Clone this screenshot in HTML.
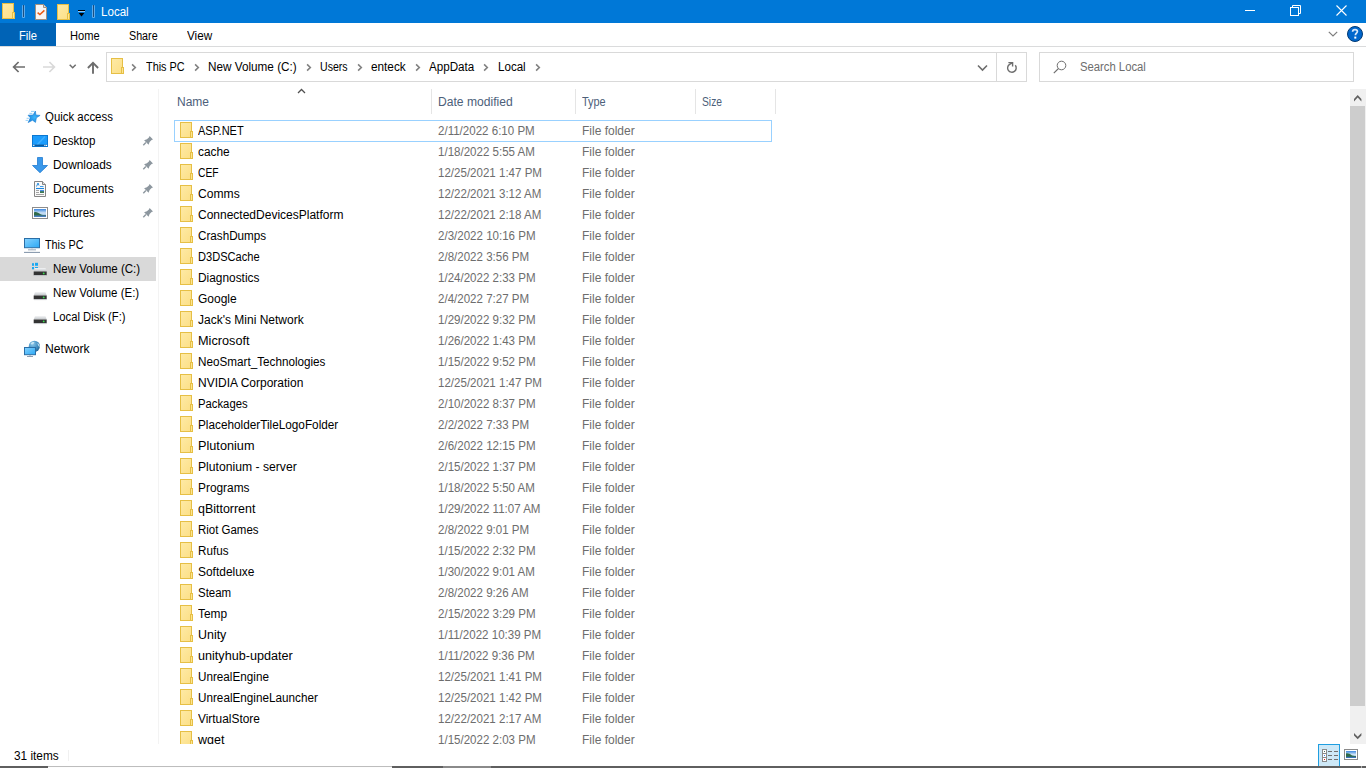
<!DOCTYPE html>
<html><head><meta charset="utf-8">
<style>
*{margin:0;padding:0;box-sizing:border-box}
html,body{width:1366px;height:768px;overflow:hidden;background:#fff;font-family:"Liberation Sans",sans-serif;font-size:12px;color:#000}
.a{position:absolute;display:block}
.t{position:absolute;white-space:nowrap;line-height:14px;height:14px}
.hdr{color:#4c607a}
.g{color:#6d6d6d}
.sep{position:absolute;width:1px;background:#e5e5e5}
#list{position:absolute;left:159px;top:114px;width:1191px;height:630px;overflow:hidden}
</style></head>
<body>
<svg width="0" height="0" style="position:absolute"><defs><linearGradient id="fg" x1="0" y1="0" x2="1" y2="1"><stop offset="0" stop-color="#feeaa6"/><stop offset="1" stop-color="#fcdf86"/></linearGradient></defs></svg>
<div class="a" style="left:0;top:0;width:1366px;height:23px;background:#0078d7"></div>
<svg class="a" style="left:2px;top:3px" width="14" height="17" viewBox="0 0 14 17"><rect x="0.5" y="0.5" width="11" height="15" fill="url(#fg)" stroke="#e6bf45"/><rect x="10.5" y="9.5" width="2" height="6" fill="#fde590" stroke="#e6bf45"/></svg>
<div class="a" style="left:22px;top:5px;width:3px;height:13px;background:#5eaaea;border-radius:1px"></div><div class="a" style="left:23px;top:5px;width:1px;height:12px;background:#1c4f80"></div>
<svg class="a" style="left:35px;top:4px" width="13" height="16" viewBox="0 0 13 16"><path d="M0.5 0.5H8.5L11.5 3.5V15.5H0.5Z" fill="#f6f6f6" stroke="#a3917f"/><path d="M8.5 0.5V3.5H11.5" fill="#ddd" stroke="#a3917f"/><path d="M2.6 8.6L4.9 10.6L9.4 6.4" fill="none" stroke="#ea5a14" stroke-width="1.5"/></svg>
<svg class="a" style="left:57px;top:4px" width="14" height="17" viewBox="0 0 14 17"><rect x="0.5" y="0.5" width="11" height="15" fill="url(#fg)" stroke="#e6bf45"/><rect x="10.5" y="9.5" width="2" height="6" fill="#fde590" stroke="#e6bf45"/></svg>
<svg class="a" style="left:78px;top:10px" width="8" height="8" viewBox="0 0 8 8"><rect x="0" y="0" width="7" height="1" fill="#000"/><rect x="0" y="1" width="7" height="1" fill="#8cc6f5"/><path d="M0.6 3H6.4L3.5 6.6Z" fill="#000"/></svg>
<div class="a" style="left:92px;top:5px;width:3px;height:13px;background:#5eaaea;border-radius:1px"></div><div class="a" style="left:93px;top:5px;width:1px;height:12px;background:#1c4f80"></div>
<div class="t" style="left:101px;top:5px;transform:scaleX(0.965);transform-origin:0 0;color:#fff">Local</div>
<div class="a" style="left:1245px;top:10px;width:10px;height:1px;background:#fff"></div>
<svg class="a" style="left:1289px;top:4px" width="12" height="12" viewBox="0 0 12 12"><rect x="1.5" y="3.5" width="8" height="8" fill="none" stroke="#fff"/><path d="M3.5 3.5V1.5H11.5V9.5H9.5" fill="none" stroke="#fff"/></svg>
<svg class="a" style="left:1336px;top:5px" width="11" height="11" viewBox="0 0 11 11"><path d="M0.5 0.5L10.5 10.5M10.5 0.5L0.5 10.5" stroke="#fff" stroke-width="1.1"/></svg>
<div class="a" style="left:0;top:46px;width:1366px;height:1px;background:#dadbdc"></div>
<div class="a" style="left:0;top:23px;width:56px;height:23px;background:#0063b6"></div>
<div class="t" style="left:19px;top:29px;transform:scaleX(0.933);transform-origin:0 0;color:#fff">File</div>
<div class="t" style="left:70px;top:29px;transform:scaleX(0.926);transform-origin:0 0">Home</div>
<div class="t" style="left:129px;top:29px;transform:scaleX(0.894);transform-origin:0 0">Share</div>
<div class="t" style="left:187px;top:29px;transform:scaleX(0.976);transform-origin:0 0">View</div>
<svg class="a" style="left:1328px;top:31px" width="10" height="6" viewBox="0 0 10 6"><path d="M0.8 0.8L5 5L9.2 0.8" fill="none" stroke="#7d7d7d" stroke-width="1.2"/></svg>
<svg class="a" style="left:1347px;top:26px" width="16" height="16" viewBox="0 0 16 16"><circle cx="8" cy="8" r="7.5" fill="#0066cc" stroke="#023a73" stroke-width="1"/><path d="M5.6 5.8C5.6 4.3 6.7 3.6 8 3.6C9.4 3.6 10.4 4.4 10.4 5.6C10.4 7.1 8.4 7.3 8.4 9.2" fill="none" stroke="#d8e8fa" stroke-width="1.7"/><rect x="7.3" y="10.6" width="2" height="2" fill="#fff"/></svg>
<svg class="a" style="left:12px;top:61px" width="14" height="12" viewBox="0 0 14 12"><path d="M13 6H1.6M6.6 1L1.6 6L6.6 11" fill="none" stroke="#6d6d6d" stroke-width="1.7"/></svg>
<svg class="a" style="left:42px;top:61px" width="14" height="12" viewBox="0 0 14 12"><path d="M1 6H12.4M7.4 1L12.4 6L7.4 11" fill="none" stroke="#d9d9d9" stroke-width="1.7"/></svg>
<svg class="a" style="left:68px;top:63px" width="9" height="7" viewBox="0 0 9 7"><path d="M1.7 1.7L4.7 4.7L7.7 1.7" fill="none" stroke="#6d6d6d" stroke-width="1.5"/></svg>
<svg class="a" style="left:86px;top:61px" width="14" height="14" viewBox="0 0 14 14"><path d="M7 12.7V2M1.9 7L7 1.9L12.1 7" fill="none" stroke="#6d6d6d" stroke-width="1.9"/></svg>
<div class="a" style="left:106px;top:52px;width:921px;height:30px;border:1px solid #d9d9d9"></div>
<div class="a" style="left:996px;top:53px;width:1px;height:28px;background:#d9d9d9"></div>
<svg class="a" style="left:111px;top:58px" width="14" height="17" viewBox="0 0 14 17"><rect x="0.5" y="0.5" width="11" height="15" fill="url(#fg)" stroke="#e6bf45"/><rect x="10.5" y="9.5" width="2" height="6" fill="#fde590" stroke="#e6bf45"/></svg>
<svg class="a" style="left:131px;top:63px" width="7" height="9" viewBox="0 0 7 9"><path d="M1.1 1.4L4.3 4.5L1.1 7.6" fill="none" stroke="#808080" stroke-width="1.6"/></svg>
<svg class="a" style="left:194px;top:63px" width="7" height="9" viewBox="0 0 7 9"><path d="M1.1 1.4L4.3 4.5L1.1 7.6" fill="none" stroke="#808080" stroke-width="1.6"/></svg>
<svg class="a" style="left:306px;top:63px" width="7" height="9" viewBox="0 0 7 9"><path d="M1.1 1.4L4.3 4.5L1.1 7.6" fill="none" stroke="#808080" stroke-width="1.6"/></svg>
<svg class="a" style="left:357px;top:63px" width="7" height="9" viewBox="0 0 7 9"><path d="M1.1 1.4L4.3 4.5L1.1 7.6" fill="none" stroke="#808080" stroke-width="1.6"/></svg>
<svg class="a" style="left:415px;top:63px" width="7" height="9" viewBox="0 0 7 9"><path d="M1.1 1.4L4.3 4.5L1.1 7.6" fill="none" stroke="#808080" stroke-width="1.6"/></svg>
<svg class="a" style="left:483px;top:63px" width="7" height="9" viewBox="0 0 7 9"><path d="M1.1 1.4L4.3 4.5L1.1 7.6" fill="none" stroke="#808080" stroke-width="1.6"/></svg>
<svg class="a" style="left:535px;top:63px" width="7" height="9" viewBox="0 0 7 9"><path d="M1.1 1.4L4.3 4.5L1.1 7.6" fill="none" stroke="#808080" stroke-width="1.6"/></svg>
<div class="t" style="left:146px;top:60px;transform:scaleX(0.905);transform-origin:0 0">This PC</div>
<div class="t" style="left:208px;top:60px;transform:scaleX(0.978);transform-origin:0 0">New Volume (C:)</div>
<div class="t" style="left:320px;top:60px;transform:scaleX(0.881);transform-origin:0 0">Users</div>
<div class="t" style="left:371px;top:60px;transform:scaleX(0.981);transform-origin:0 0">enteck</div>
<div class="t" style="left:429px;top:60px;transform:scaleX(0.970);transform-origin:0 0">AppData</div>
<div class="t" style="left:498px;top:60px;transform:scaleX(0.965);transform-origin:0 0">Local</div>
<svg class="a" style="left:977px;top:64px" width="11" height="8" viewBox="0 0 11 8"><path d="M1 1.5L5.5 6L10 1.5" fill="none" stroke="#6d6d6d" stroke-width="1.6"/></svg>
<svg class="a" style="left:1002px;top:57px" width="20" height="20" viewBox="0 0 20 20"><path d="M13.3 8.3A4.3 4.3 0 1 1 7.6 7.3L10.6 5.7" fill="none" stroke="#6d6d6d" stroke-width="1.4"/><path d="M6.4 5.6H10.6V9.6" fill="none" stroke="#6d6d6d" stroke-width="1.4"/></svg>
<div class="a" style="left:1039px;top:52px;width:315px;height:30px;border:1px solid #d9d9d9"></div>
<svg class="a" style="left:1053px;top:60px" width="14" height="14" viewBox="0 0 14 14"><circle cx="8.5" cy="5.5" r="4.3" fill="none" stroke="#6d6d6d" stroke-width="1"/><path d="M5.5 8.5L0.8 13.2" stroke="#6d6d6d" stroke-width="1.1"/></svg>
<div class="t" style="left:1080px;top:60px;transform:scaleX(0.940);transform-origin:0 0;color:#6d6d6d">Search Local</div>
<div class="a" style="left:158px;top:89px;width:1px;height:655px;background:#f3f3f3"></div>
<div class="a" style="left:0;top:257px;width:156px;height:24px;background:#d9d9d9"></div>
<div class="t" style="left:45px;top:110px;transform:scaleX(0.951);transform-origin:0 0">Quick access</div>
<div class="t" style="left:53px;top:134px;transform:scaleX(0.963);transform-origin:0 0">Desktop</div>
<div class="t" style="left:53px;top:158px;transform:scaleX(0.990);transform-origin:0 0">Downloads</div>
<div class="t" style="left:53px;top:182px">Documents</div>
<div class="t" style="left:53px;top:206px;transform:scaleX(0.967);transform-origin:0 0">Pictures</div>
<div class="t" style="left:45px;top:238px;transform:scaleX(0.901);transform-origin:0 0">This PC</div>
<div class="t" style="left:53px;top:262px;transform:scaleX(0.961);transform-origin:0 0">New Volume (C:)</div>
<div class="t" style="left:53px;top:286px;transform:scaleX(0.957);transform-origin:0 0">New Volume (E:)</div>
<div class="t" style="left:53px;top:310px;transform:scaleX(0.939);transform-origin:0 0">Local Disk (F:)</div>
<div class="t" style="left:45px;top:342px;transform:scaleX(1.016);transform-origin:0 0">Network</div>
<svg class="a" style="left:22px;top:108px" width="22" height="18" viewBox="0 0 22 18"><defs><radialGradient id="sg" cx="0.55" cy="0.55" r="0.6"><stop offset="0" stop-color="#3cb6fb"/><stop offset="1" stop-color="#1a7fd6"/></radialGradient></defs><path d="M13.4 3L13.9 7L18.1 7.4L14.4 9.8L13.5 14.4L10.5 12.2L6.2 14.6L8.3 9.8L6 7.2L11 7Z" fill="url(#sg)" stroke="#1a7fd6" stroke-width="0.6" stroke-linejoin="round"/><path d="M9 3.4H12.6M7.4 5.4H10.4M4.6 10.3H6.9M3.6 12.4H6" stroke="#86c8f6" stroke-width="0.9"/></svg>
<svg class="a" style="left:32px;top:135px" width="16" height="12" viewBox="0 0 16 12"><rect x="0.5" y="0.5" width="15" height="11" fill="#1c9cfc" stroke="#0b78d2"/><path d="M5 10L13 1.5" stroke="#3fb0ff" stroke-width="1.6"/><rect x="1" y="9.6" width="14" height="1.6" fill="#0c5a9e"/><rect x="1.2" y="9.8" width="1.2" height="1.2" fill="#fff"/><rect x="12.3" y="9.8" width="1.2" height="1.2" fill="#fff"/><rect x="13.9" y="9.8" width="1.2" height="1.2" fill="#fff"/></svg>
<svg class="a" style="left:32px;top:157px" width="16" height="16" viewBox="0 0 16 16"><path d="M5.5 0.5H10.5V8.5H15.5L8 15.7L0.5 8.5H5.5Z" fill="#3a98ea" stroke="#1f7bd2" stroke-width="0.8" stroke-linejoin="round"/></svg>
<svg class="a" style="left:34px;top:181px" width="12" height="16" viewBox="0 0 12 16"><path d="M0.5 0.5H8.5L11.5 3.5V15.5H0.5Z" fill="#fafafa" stroke="#858585"/><path d="M8.5 0.5V3.5H11.5" fill="#e0e0e0" stroke="#858585"/><path d="M2.5 5.5L4 2M4 2L5 4.5" stroke="#2a8ee0" stroke-width="1"/><path d="M6 5.5H9.5" stroke="#2a8ee0" stroke-width="0.9"/><path d="M2 7.5H10" stroke="#1a86e0" stroke-width="1.1"/><path d="M2 9.5H5M2 11.5H5M2 13.5H10" stroke="#9a9a9a" stroke-width="0.9"/><rect x="6" y="9" width="4" height="3" fill="#3f7a52"/><rect x="6" y="9" width="4" height="1.2" fill="#4a8ee8"/></svg>
<svg class="a" style="left:32px;top:207px" width="16" height="12" viewBox="0 0 16 12"><defs><linearGradient id="pg" x1="0" y1="0" x2="0" y2="1"><stop offset="0" stop-color="#3a86e0"/><stop offset="0.5" stop-color="#cfe3f5"/><stop offset="1" stop-color="#7aa8d8"/></linearGradient></defs><rect x="0.5" y="0.5" width="15" height="11" fill="#fff" stroke="#8c8c8c"/><rect x="2" y="2" width="12" height="8" fill="url(#pg)"/><path d="M2 5.5C4 4.5 6 5.5 9 7.5C11 8.2 13 8 14 8V10H2Z" fill="#2f6a4a"/><path d="M2 8.5H14V10H2Z" fill="#4a7fc0"/></svg>
<svg class="a" style="left:24px;top:238px" width="16" height="16" viewBox="0 0 16 16"><defs><linearGradient id="mg" x1="0" y1="0" x2="1" y2="1"><stop offset="0" stop-color="#86d2ff"/><stop offset="1" stop-color="#2aa8f4"/></linearGradient></defs><rect x="0.5" y="0.5" width="15" height="9.2" fill="url(#mg)" stroke="#2b6ea6"/><rect x="7" y="10.2" width="2" height="1" fill="#c8d2dc"/><rect x="4" y="11.4" width="8" height="0.9" fill="#8d9db0"/><rect x="0" y="13.5" width="16" height="0.6" fill="#dfe5ea"/><rect x="0" y="14" width="16" height="1" fill="#8d9db0"/></svg>
<svg class="a" style="left:32px;top:262px" width="16" height="16" viewBox="0 0 16 16"><rect x="0" y="1.2" width="2" height="2.6" fill="#1ba8f2"/><rect x="3" y="0.8" width="3" height="3" fill="#1ba8f2"/><rect x="0" y="5" width="2" height="2.3" fill="#1ba8f2"/><rect x="3" y="5" width="3" height="2.6" fill="#1ba8f2"/><defs><linearGradient id="dg" x1="0" y1="0" x2="0" y2="1"><stop offset="0" stop-color="#f4f5f6"/><stop offset="1" stop-color="#bfc3c7"/></linearGradient></defs><path d="M3 6H13.5L14.7 9.5H1.8Z" fill="url(#dg)"/><rect x="1.7" y="9.5" width="13" height="3.8" fill="#333"/><rect x="2" y="13.3" width="12.5" height="0.8" fill="#c8ccd0"/><circle cx="11.7" cy="11.4" r="0.9" fill="#3be04e"/></svg>
<svg class="a" style="left:32px;top:286px" width="16" height="16" viewBox="0 0 16 16"><defs><linearGradient id="dg" x1="0" y1="0" x2="0" y2="1"><stop offset="0" stop-color="#f4f5f6"/><stop offset="1" stop-color="#bfc3c7"/></linearGradient></defs><path d="M3 6H13.5L14.7 9.5H1.8Z" fill="url(#dg)"/><rect x="1.7" y="9.5" width="13" height="3.8" fill="#333"/><rect x="2" y="13.3" width="12.5" height="0.8" fill="#c8ccd0"/><circle cx="11.7" cy="11.4" r="0.9" fill="#3be04e"/></svg>
<svg class="a" style="left:32px;top:310px" width="16" height="16" viewBox="0 0 16 16"><defs><linearGradient id="dg" x1="0" y1="0" x2="0" y2="1"><stop offset="0" stop-color="#f4f5f6"/><stop offset="1" stop-color="#bfc3c7"/></linearGradient></defs><path d="M3 6H13.5L14.7 9.5H1.8Z" fill="url(#dg)"/><rect x="1.7" y="9.5" width="13" height="3.8" fill="#333"/><rect x="2" y="13.3" width="12.5" height="0.8" fill="#c8ccd0"/><circle cx="11.7" cy="11.4" r="0.9" fill="#3be04e"/></svg>
<svg class="a" style="left:24px;top:340px" width="17" height="18" viewBox="0 0 17 18"><defs><linearGradient id="ng" x1="0" y1="0" x2="1" y2="1"><stop offset="0" stop-color="#86d2ff"/><stop offset="1" stop-color="#2aa8f4"/></linearGradient></defs><radialGradient id="gg" cx="0.35" cy="0.3" r="0.8"><stop offset="0" stop-color="#8cc8ea"/><stop offset="0.6" stop-color="#3f8cc0"/><stop offset="1" stop-color="#1f5f8c"/></radialGradient><circle cx="10.4" cy="6.3" r="5.6" fill="url(#gg)"/><path d="M6.5 4C7.5 2 9.5 1.5 10.5 2.5C10 4 8 5 6.5 4Z M13.5 2.8C15 4 16 5.5 15.8 7.5C14.5 6.5 13.5 5 13.5 2.8Z" fill="#d4ecf8" opacity="0.85"/><rect x="0.5" y="7.5" width="11" height="7.2" fill="url(#ng)" stroke="#2b6ea6"/><rect x="5" y="15" width="2" height="1" fill="#b8c4d0"/><rect x="3" y="16" width="6" height="1" fill="#8d9db0"/></svg>
<svg class="a" style="left:138px;top:132px" width="20" height="18" viewBox="0 0 20 18"><path d="M11.6 4L15 7.4L13.6 8L11.6 10L10.6 12.7L6.1 8.2L8.9 7.2L10.9 5.4Z" fill="#8d979f"/><path d="M7.9 10.5L5.3 13.3" stroke="#8d979f" stroke-width="1.4"/></svg>
<svg class="a" style="left:138px;top:156px" width="20" height="18" viewBox="0 0 20 18"><path d="M11.6 4L15 7.4L13.6 8L11.6 10L10.6 12.7L6.1 8.2L8.9 7.2L10.9 5.4Z" fill="#8d979f"/><path d="M7.9 10.5L5.3 13.3" stroke="#8d979f" stroke-width="1.4"/></svg>
<svg class="a" style="left:138px;top:180px" width="20" height="18" viewBox="0 0 20 18"><path d="M11.6 4L15 7.4L13.6 8L11.6 10L10.6 12.7L6.1 8.2L8.9 7.2L10.9 5.4Z" fill="#8d979f"/><path d="M7.9 10.5L5.3 13.3" stroke="#8d979f" stroke-width="1.4"/></svg>
<svg class="a" style="left:138px;top:204px" width="20" height="18" viewBox="0 0 20 18"><path d="M11.6 4L15 7.4L13.6 8L11.6 10L10.6 12.7L6.1 8.2L8.9 7.2L10.9 5.4Z" fill="#8d979f"/><path d="M7.9 10.5L5.3 13.3" stroke="#8d979f" stroke-width="1.4"/></svg>
<div class="t hdr" style="left:177px;top:95px">Name</div>
<div class="t hdr" style="left:438px;top:95px;transform:scaleX(1.009);transform-origin:0 0">Date modified</div>
<div class="t hdr" style="left:582px;top:95px;transform:scaleX(0.909);transform-origin:0 0">Type</div>
<div class="t hdr" style="left:702px;top:95px;transform:scaleX(0.857);transform-origin:0 0">Size</div>
<div class="sep" style="left:431px;top:89px;height:25px"></div>
<div class="sep" style="left:575px;top:89px;height:25px"></div>
<div class="sep" style="left:695px;top:89px;height:25px"></div>
<div class="sep" style="left:775px;top:89px;height:25px"></div>
<svg class="a" style="left:297px;top:88px" width="10" height="6" viewBox="0 0 10 6"><path d="M1 5L4.5 1.5L8 5" fill="none" stroke="#505050" stroke-width="1.25"/></svg>
<div id="list">
<svg class="a" style="left:21px;top:8px" width="14" height="17" viewBox="0 0 14 17"><rect x="0.5" y="0.5" width="11" height="15" fill="url(#fg)" stroke="#e6bf45"/><rect x="10.5" y="9.5" width="2" height="6" fill="#fde590" stroke="#e6bf45"/></svg>
<div class="t" style="left:39px;top:10px;transform:scaleX(0.917);transform-origin:0 0">ASP.NET</div>
<div class="t g" style="left:279px;top:10px;transform:scaleX(0.962);transform-origin:0 0">2/11/2022 6:10 PM</div>
<div class="t g" style="left:423px;top:10px">File folder</div>
<svg class="a" style="left:21px;top:29px" width="14" height="17" viewBox="0 0 14 17"><rect x="0.5" y="0.5" width="11" height="15" fill="url(#fg)" stroke="#e6bf45"/><rect x="10.5" y="9.5" width="2" height="6" fill="#fde590" stroke="#e6bf45"/></svg>
<div class="t" style="left:39px;top:31px;transform:scaleX(0.990);transform-origin:0 0">cache</div>
<div class="t g" style="left:279px;top:31px;transform:scaleX(0.962);transform-origin:0 0">1/18/2022 5:55 AM</div>
<div class="t g" style="left:423px;top:31px">File folder</div>
<svg class="a" style="left:21px;top:50px" width="14" height="17" viewBox="0 0 14 17"><rect x="0.5" y="0.5" width="11" height="15" fill="url(#fg)" stroke="#e6bf45"/><rect x="10.5" y="9.5" width="2" height="6" fill="#fde590" stroke="#e6bf45"/></svg>
<div class="t" style="left:39px;top:52px;transform:scaleX(0.858);transform-origin:0 0">CEF</div>
<div class="t g" style="left:279px;top:52px;transform:scaleX(0.962);transform-origin:0 0">12/25/2021 1:47 PM</div>
<div class="t g" style="left:423px;top:52px">File folder</div>
<svg class="a" style="left:21px;top:71px" width="14" height="17" viewBox="0 0 14 17"><rect x="0.5" y="0.5" width="11" height="15" fill="url(#fg)" stroke="#e6bf45"/><rect x="10.5" y="9.5" width="2" height="6" fill="#fde590" stroke="#e6bf45"/></svg>
<div class="t" style="left:39px;top:73px;transform:scaleX(1.009);transform-origin:0 0">Comms</div>
<div class="t g" style="left:279px;top:73px;transform:scaleX(0.962);transform-origin:0 0">12/22/2021 3:12 AM</div>
<div class="t g" style="left:423px;top:73px">File folder</div>
<svg class="a" style="left:21px;top:92px" width="14" height="17" viewBox="0 0 14 17"><rect x="0.5" y="0.5" width="11" height="15" fill="url(#fg)" stroke="#e6bf45"/><rect x="10.5" y="9.5" width="2" height="6" fill="#fde590" stroke="#e6bf45"/></svg>
<div class="t" style="left:39px;top:94px">ConnectedDevicesPlatform</div>
<div class="t g" style="left:279px;top:94px;transform:scaleX(0.962);transform-origin:0 0">12/22/2021 2:18 AM</div>
<div class="t g" style="left:423px;top:94px">File folder</div>
<svg class="a" style="left:21px;top:113px" width="14" height="17" viewBox="0 0 14 17"><rect x="0.5" y="0.5" width="11" height="15" fill="url(#fg)" stroke="#e6bf45"/><rect x="10.5" y="9.5" width="2" height="6" fill="#fde590" stroke="#e6bf45"/></svg>
<div class="t" style="left:39px;top:115px;transform:scaleX(0.974);transform-origin:0 0">CrashDumps</div>
<div class="t g" style="left:279px;top:115px;transform:scaleX(0.962);transform-origin:0 0">2/3/2022 10:16 PM</div>
<div class="t g" style="left:423px;top:115px">File folder</div>
<svg class="a" style="left:21px;top:134px" width="14" height="17" viewBox="0 0 14 17"><rect x="0.5" y="0.5" width="11" height="15" fill="url(#fg)" stroke="#e6bf45"/><rect x="10.5" y="9.5" width="2" height="6" fill="#fde590" stroke="#e6bf45"/></svg>
<div class="t" style="left:39px;top:136px;transform:scaleX(0.924);transform-origin:0 0">D3DSCache</div>
<div class="t g" style="left:279px;top:136px;transform:scaleX(0.962);transform-origin:0 0">2/8/2022 3:56 PM</div>
<div class="t g" style="left:423px;top:136px">File folder</div>
<svg class="a" style="left:21px;top:155px" width="14" height="17" viewBox="0 0 14 17"><rect x="0.5" y="0.5" width="11" height="15" fill="url(#fg)" stroke="#e6bf45"/><rect x="10.5" y="9.5" width="2" height="6" fill="#fde590" stroke="#e6bf45"/></svg>
<div class="t" style="left:39px;top:157px;transform:scaleX(0.990);transform-origin:0 0">Diagnostics</div>
<div class="t g" style="left:279px;top:157px;transform:scaleX(0.962);transform-origin:0 0">1/24/2022 2:33 PM</div>
<div class="t g" style="left:423px;top:157px">File folder</div>
<svg class="a" style="left:21px;top:176px" width="14" height="17" viewBox="0 0 14 17"><rect x="0.5" y="0.5" width="11" height="15" fill="url(#fg)" stroke="#e6bf45"/><rect x="10.5" y="9.5" width="2" height="6" fill="#fde590" stroke="#e6bf45"/></svg>
<div class="t" style="left:39px;top:178px">Google</div>
<div class="t g" style="left:279px;top:178px;transform:scaleX(0.962);transform-origin:0 0">2/4/2022 7:27 PM</div>
<div class="t g" style="left:423px;top:178px">File folder</div>
<svg class="a" style="left:21px;top:197px" width="14" height="17" viewBox="0 0 14 17"><rect x="0.5" y="0.5" width="11" height="15" fill="url(#fg)" stroke="#e6bf45"/><rect x="10.5" y="9.5" width="2" height="6" fill="#fde590" stroke="#e6bf45"/></svg>
<div class="t" style="left:39px;top:199px">Jack&#x27;s Mini Network</div>
<div class="t g" style="left:279px;top:199px;transform:scaleX(0.962);transform-origin:0 0">1/29/2022 9:32 PM</div>
<div class="t g" style="left:423px;top:199px">File folder</div>
<svg class="a" style="left:21px;top:218px" width="14" height="17" viewBox="0 0 14 17"><rect x="0.5" y="0.5" width="11" height="15" fill="url(#fg)" stroke="#e6bf45"/><rect x="10.5" y="9.5" width="2" height="6" fill="#fde590" stroke="#e6bf45"/></svg>
<div class="t" style="left:39px;top:220px;transform:scaleX(1.059);transform-origin:0 0">Microsoft</div>
<div class="t g" style="left:279px;top:220px;transform:scaleX(0.962);transform-origin:0 0">1/26/2022 1:43 PM</div>
<div class="t g" style="left:423px;top:220px">File folder</div>
<svg class="a" style="left:21px;top:239px" width="14" height="17" viewBox="0 0 14 17"><rect x="0.5" y="0.5" width="11" height="15" fill="url(#fg)" stroke="#e6bf45"/><rect x="10.5" y="9.5" width="2" height="6" fill="#fde590" stroke="#e6bf45"/></svg>
<div class="t" style="left:39px;top:241px;transform:scaleX(0.975);transform-origin:0 0">NeoSmart_Technologies</div>
<div class="t g" style="left:279px;top:241px;transform:scaleX(0.962);transform-origin:0 0">1/15/2022 9:52 PM</div>
<div class="t g" style="left:423px;top:241px">File folder</div>
<svg class="a" style="left:21px;top:260px" width="14" height="17" viewBox="0 0 14 17"><rect x="0.5" y="0.5" width="11" height="15" fill="url(#fg)" stroke="#e6bf45"/><rect x="10.5" y="9.5" width="2" height="6" fill="#fde590" stroke="#e6bf45"/></svg>
<div class="t" style="left:39px;top:262px">NVIDIA Corporation</div>
<div class="t g" style="left:279px;top:262px;transform:scaleX(0.962);transform-origin:0 0">12/25/2021 1:47 PM</div>
<div class="t g" style="left:423px;top:262px">File folder</div>
<svg class="a" style="left:21px;top:281px" width="14" height="17" viewBox="0 0 14 17"><rect x="0.5" y="0.5" width="11" height="15" fill="url(#fg)" stroke="#e6bf45"/><rect x="10.5" y="9.5" width="2" height="6" fill="#fde590" stroke="#e6bf45"/></svg>
<div class="t" style="left:39px;top:283px;transform:scaleX(0.941);transform-origin:0 0">Packages</div>
<div class="t g" style="left:279px;top:283px;transform:scaleX(0.962);transform-origin:0 0">2/10/2022 8:37 PM</div>
<div class="t g" style="left:423px;top:283px">File folder</div>
<svg class="a" style="left:21px;top:302px" width="14" height="17" viewBox="0 0 14 17"><rect x="0.5" y="0.5" width="11" height="15" fill="url(#fg)" stroke="#e6bf45"/><rect x="10.5" y="9.5" width="2" height="6" fill="#fde590" stroke="#e6bf45"/></svg>
<div class="t" style="left:39px;top:304px;transform:scaleX(0.981);transform-origin:0 0">PlaceholderTileLogoFolder</div>
<div class="t g" style="left:279px;top:304px;transform:scaleX(0.962);transform-origin:0 0">2/2/2022 7:33 PM</div>
<div class="t g" style="left:423px;top:304px">File folder</div>
<svg class="a" style="left:21px;top:323px" width="14" height="17" viewBox="0 0 14 17"><rect x="0.5" y="0.5" width="11" height="15" fill="url(#fg)" stroke="#e6bf45"/><rect x="10.5" y="9.5" width="2" height="6" fill="#fde590" stroke="#e6bf45"/></svg>
<div class="t" style="left:39px;top:325px;transform:scaleX(1.058);transform-origin:0 0">Plutonium</div>
<div class="t g" style="left:279px;top:325px;transform:scaleX(0.962);transform-origin:0 0">2/6/2022 12:15 PM</div>
<div class="t g" style="left:423px;top:325px">File folder</div>
<svg class="a" style="left:21px;top:344px" width="14" height="17" viewBox="0 0 14 17"><rect x="0.5" y="0.5" width="11" height="15" fill="url(#fg)" stroke="#e6bf45"/><rect x="10.5" y="9.5" width="2" height="6" fill="#fde590" stroke="#e6bf45"/></svg>
<div class="t" style="left:39px;top:346px;transform:scaleX(1.014);transform-origin:0 0">Plutonium - server</div>
<div class="t g" style="left:279px;top:346px;transform:scaleX(0.962);transform-origin:0 0">2/15/2022 1:37 PM</div>
<div class="t g" style="left:423px;top:346px">File folder</div>
<svg class="a" style="left:21px;top:365px" width="14" height="17" viewBox="0 0 14 17"><rect x="0.5" y="0.5" width="11" height="15" fill="url(#fg)" stroke="#e6bf45"/><rect x="10.5" y="9.5" width="2" height="6" fill="#fde590" stroke="#e6bf45"/></svg>
<div class="t" style="left:39px;top:367px;transform:scaleX(0.990);transform-origin:0 0">Programs</div>
<div class="t g" style="left:279px;top:367px;transform:scaleX(0.962);transform-origin:0 0">1/18/2022 5:50 AM</div>
<div class="t g" style="left:423px;top:367px">File folder</div>
<svg class="a" style="left:21px;top:386px" width="14" height="17" viewBox="0 0 14 17"><rect x="0.5" y="0.5" width="11" height="15" fill="url(#fg)" stroke="#e6bf45"/><rect x="10.5" y="9.5" width="2" height="6" fill="#fde590" stroke="#e6bf45"/></svg>
<div class="t" style="left:39px;top:388px;transform:scaleX(1.036);transform-origin:0 0">qBittorrent</div>
<div class="t g" style="left:279px;top:388px;transform:scaleX(0.962);transform-origin:0 0">1/29/2022 11:07 AM</div>
<div class="t g" style="left:423px;top:388px">File folder</div>
<svg class="a" style="left:21px;top:407px" width="14" height="17" viewBox="0 0 14 17"><rect x="0.5" y="0.5" width="11" height="15" fill="url(#fg)" stroke="#e6bf45"/><rect x="10.5" y="9.5" width="2" height="6" fill="#fde590" stroke="#e6bf45"/></svg>
<div class="t" style="left:39px;top:409px;transform:scaleX(0.955);transform-origin:0 0">Riot Games</div>
<div class="t g" style="left:279px;top:409px;transform:scaleX(0.962);transform-origin:0 0">2/8/2022 9:01 PM</div>
<div class="t g" style="left:423px;top:409px">File folder</div>
<svg class="a" style="left:21px;top:428px" width="14" height="17" viewBox="0 0 14 17"><rect x="0.5" y="0.5" width="11" height="15" fill="url(#fg)" stroke="#e6bf45"/><rect x="10.5" y="9.5" width="2" height="6" fill="#fde590" stroke="#e6bf45"/></svg>
<div class="t" style="left:39px;top:430px;transform:scaleX(0.972);transform-origin:0 0">Rufus</div>
<div class="t g" style="left:279px;top:430px;transform:scaleX(0.962);transform-origin:0 0">1/15/2022 2:32 PM</div>
<div class="t g" style="left:423px;top:430px">File folder</div>
<svg class="a" style="left:21px;top:449px" width="14" height="17" viewBox="0 0 14 17"><rect x="0.5" y="0.5" width="11" height="15" fill="url(#fg)" stroke="#e6bf45"/><rect x="10.5" y="9.5" width="2" height="6" fill="#fde590" stroke="#e6bf45"/></svg>
<div class="t" style="left:39px;top:451px;transform:scaleX(0.995);transform-origin:0 0">Softdeluxe</div>
<div class="t g" style="left:279px;top:451px;transform:scaleX(0.962);transform-origin:0 0">1/30/2022 9:01 AM</div>
<div class="t g" style="left:423px;top:451px">File folder</div>
<svg class="a" style="left:21px;top:470px" width="14" height="17" viewBox="0 0 14 17"><rect x="0.5" y="0.5" width="11" height="15" fill="url(#fg)" stroke="#e6bf45"/><rect x="10.5" y="9.5" width="2" height="6" fill="#fde590" stroke="#e6bf45"/></svg>
<div class="t" style="left:39px;top:472px;transform:scaleX(0.957);transform-origin:0 0">Steam</div>
<div class="t g" style="left:279px;top:472px;transform:scaleX(0.962);transform-origin:0 0">2/8/2022 9:26 AM</div>
<div class="t g" style="left:423px;top:472px">File folder</div>
<svg class="a" style="left:21px;top:491px" width="14" height="17" viewBox="0 0 14 17"><rect x="0.5" y="0.5" width="11" height="15" fill="url(#fg)" stroke="#e6bf45"/><rect x="10.5" y="9.5" width="2" height="6" fill="#fde590" stroke="#e6bf45"/></svg>
<div class="t" style="left:39px;top:493px;transform:scaleX(0.991);transform-origin:0 0">Temp</div>
<div class="t g" style="left:279px;top:493px;transform:scaleX(0.962);transform-origin:0 0">2/15/2022 3:29 PM</div>
<div class="t g" style="left:423px;top:493px">File folder</div>
<svg class="a" style="left:21px;top:512px" width="14" height="17" viewBox="0 0 14 17"><rect x="0.5" y="0.5" width="11" height="15" fill="url(#fg)" stroke="#e6bf45"/><rect x="10.5" y="9.5" width="2" height="6" fill="#fde590" stroke="#e6bf45"/></svg>
<div class="t" style="left:39px;top:514px;transform:scaleX(1.036);transform-origin:0 0">Unity</div>
<div class="t g" style="left:279px;top:514px;transform:scaleX(0.962);transform-origin:0 0">1/11/2022 10:39 PM</div>
<div class="t g" style="left:423px;top:514px">File folder</div>
<svg class="a" style="left:21px;top:533px" width="14" height="17" viewBox="0 0 14 17"><rect x="0.5" y="0.5" width="11" height="15" fill="url(#fg)" stroke="#e6bf45"/><rect x="10.5" y="9.5" width="2" height="6" fill="#fde590" stroke="#e6bf45"/></svg>
<div class="t" style="left:39px;top:535px;transform:scaleX(1.052);transform-origin:0 0">unityhub-updater</div>
<div class="t g" style="left:279px;top:535px;transform:scaleX(0.962);transform-origin:0 0">1/11/2022 9:36 PM</div>
<div class="t g" style="left:423px;top:535px">File folder</div>
<svg class="a" style="left:21px;top:554px" width="14" height="17" viewBox="0 0 14 17"><rect x="0.5" y="0.5" width="11" height="15" fill="url(#fg)" stroke="#e6bf45"/><rect x="10.5" y="9.5" width="2" height="6" fill="#fde590" stroke="#e6bf45"/></svg>
<div class="t" style="left:39px;top:556px;transform:scaleX(0.975);transform-origin:0 0">UnrealEngine</div>
<div class="t g" style="left:279px;top:556px;transform:scaleX(0.962);transform-origin:0 0">12/25/2021 1:41 PM</div>
<div class="t g" style="left:423px;top:556px">File folder</div>
<svg class="a" style="left:21px;top:575px" width="14" height="17" viewBox="0 0 14 17"><rect x="0.5" y="0.5" width="11" height="15" fill="url(#fg)" stroke="#e6bf45"/><rect x="10.5" y="9.5" width="2" height="6" fill="#fde590" stroke="#e6bf45"/></svg>
<div class="t" style="left:39px;top:577px;transform:scaleX(0.976);transform-origin:0 0">UnrealEngineLauncher</div>
<div class="t g" style="left:279px;top:577px;transform:scaleX(0.962);transform-origin:0 0">12/25/2021 1:42 PM</div>
<div class="t g" style="left:423px;top:577px">File folder</div>
<svg class="a" style="left:21px;top:596px" width="14" height="17" viewBox="0 0 14 17"><rect x="0.5" y="0.5" width="11" height="15" fill="url(#fg)" stroke="#e6bf45"/><rect x="10.5" y="9.5" width="2" height="6" fill="#fde590" stroke="#e6bf45"/></svg>
<div class="t" style="left:39px;top:598px;transform:scaleX(0.991);transform-origin:0 0">VirtualStore</div>
<div class="t g" style="left:279px;top:598px;transform:scaleX(0.962);transform-origin:0 0">12/22/2021 2:17 AM</div>
<div class="t g" style="left:423px;top:598px">File folder</div>
<svg class="a" style="left:21px;top:617px" width="14" height="17" viewBox="0 0 14 17"><rect x="0.5" y="0.5" width="11" height="15" fill="url(#fg)" stroke="#e6bf45"/><rect x="10.5" y="9.5" width="2" height="6" fill="#fde590" stroke="#e6bf45"/></svg>
<div class="t" style="left:39px;top:619px;transform:scaleX(1.043);transform-origin:0 0">wget</div>
<div class="t g" style="left:279px;top:619px;transform:scaleX(0.962);transform-origin:0 0">1/15/2022 2:03 PM</div>
<div class="t g" style="left:423px;top:619px">File folder</div>
<div class="a" style="left:15px;top:6px;width:598px;height:22px;border:1px solid #99d1ff"></div>
</div>
<div class="a" style="left:1350px;top:89px;width:16px;height:655px;background:#f0f0f0"></div>
<div class="a" style="left:1350px;top:106px;width:15px;height:600px;background:#cdcdcd"></div>
<svg class="a" style="left:1354px;top:95px" width="8" height="7" viewBox="0 0 8 7"><path d="M0 3.9L3.7 0.1L7.4 3.9V6.4L3.7 2.6L0 6.4Z" fill="#606060"/></svg>
<svg class="a" style="left:1354px;top:733px" width="8" height="7" viewBox="0 0 8 7"><path d="M0 0V2.5L3.7 6.3L7.4 2.5V0L3.7 3.8Z" fill="#606060"/></svg>
<div class="t" style="left:14px;top:749px;transform:scaleX(0.986);transform-origin:0 0">31 items</div>
<div class="a" style="left:68px;top:750px;width:1px;height:11px;background:#f0f0f0"></div>
<div class="a" style="left:1318px;top:744px;width:22px;height:22px;background:#cde8f7;border:1px solid #1f9ee0;border-bottom:none"></div>
<svg class="a" style="left:1322px;top:749px" width="17" height="14" viewBox="0 0 17 14"><rect x="0.5" y="0.5" width="4" height="12" fill="#fff" stroke="#8a8a8a"/><path d="M0.5 4.5H4.5M0.5 8.5H4.5" stroke="#8a8a8a"/><rect x="2" y="2" width="1" height="1" fill="#4a7060"/><rect x="2" y="6" width="1" height="1" fill="#3a80f0"/><rect x="2" y="10" width="1" height="1" fill="#e01818"/><path d="M6 2.5H10M12 2.5H16M6 6.5H10M12 6.5H16M6 10.5H10M12 10.5H16" stroke="#707070" stroke-width="1.2"/></svg>
<svg class="a" style="left:1344px;top:749px" width="14" height="12" viewBox="0 0 14 12"><rect x="0.5" y="0.5" width="13" height="10" fill="#fff" stroke="#8a8a8a"/><rect x="2" y="2" width="10" height="7" fill="url(#pg)"/><path d="M2 4.5C4 4 6 5 8 6.5C10 7 11 7 12 7V9H2Z" fill="#2f6a4a"/><path d="M2 7.8H12V9H2Z" fill="#3a70b8"/></svg>
<div class="a" style="left:0;top:766px;width:1366px;height:2px;background:#5f5f5f"></div>
<div class="a" style="left:48px;top:766px;width:344px;height:1px;background:#bdbdbd"></div><div class="a" style="left:48px;top:767px;width:344px;height:1px;background:#fdfdfd"></div>
<div class="a" style="left:1361px;top:766px;width:1px;height:2px;background:#b0b0b0"></div>
<div class="a" style="left:443px;top:766px;width:48px;height:2px;background:#8a8a8a"></div>
</body></html>
